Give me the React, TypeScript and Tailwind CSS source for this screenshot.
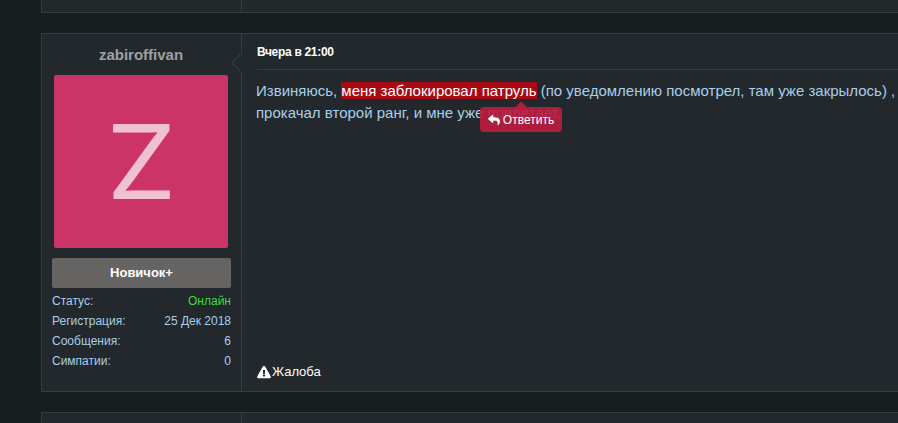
import { FaExclamationTriangle, FaReply } from 'react-icons/fa'

const stats = [
  { label: 'Статус:', value: 'Онлайн', color: 'text-[#3fdc3f]' },
  { label: 'Регистрация:', value: '25 Дек 2018', color: 'text-[#a9cfea]' },
  { label: 'Сообщения:', value: '6', color: 'text-[#a9cfea]' },
  { label: 'Симпатии:', value: '0', color: 'text-[#a9cfea]' },
]

export default function App() {
  return (
    <div className="h-[423px] w-[898px] overflow-hidden bg-[#181d20] pl-[41px] font-['Liberation_Sans',Arial,sans-serif]">
      {/* Previous post */}
      <div className="flex h-[13px] w-[900px] border-b border-l border-[#3a3d40] bg-[#22282c]">
        <div className="w-[200px] border-r border-[#3a3d40]" />
      </div>

      {/* Post */}
      <div className="mt-[20px] flex h-[359px] w-[900px] border border-r-0 border-[#3a3d40] bg-[#22282c]">
        <div className="flex w-[200px] shrink-0 flex-col border-r border-[#3a3d40] pl-[10px] pr-[10px]">
          <div className="mt-[12px] h-[18px] pr-[1px] text-center text-[15px] leading-[18px] font-bold text-[#a0a0a0]">zabiroffivan</div>
          <div className="mt-[11px] ml-[2px] flex h-[173px] w-[174px] items-center justify-center rounded-[2px] bg-[#cc3366] pb-[1px] font-['Inter',sans-serif] text-[103px] leading-none text-[#f0c2d1]">
            <span className="scale-x-[1.08]">Z</span>
          </div>
          <div className="mt-[10px] flex h-[30px] w-[179px] items-center justify-center rounded-[2px] bg-[#666462] text-[13px] font-bold text-white">
            Новичок+
          </div>
          <div className="mt-[3px] w-[179px]">
            {stats.map((row) => (
              <div key={row.label} className="flex h-[20px] items-center justify-between text-[12px] text-[#a9cfea]">
                <span>{row.label}</span>
                <span className={row.color}>{row.value}</span>
              </div>
            ))}
          </div>
        </div>

        <div className="relative flex flex-1 flex-col pl-[15px]">
          {/* Arrow on the column border */}
          <div className="absolute top-[22px] left-[-8px] h-[14px] w-[14px] rotate-45 border-b border-l border-[#3a3d40] bg-[#22282c]" />

          <div className="flex h-[36px] items-center border-b border-[#3a3d40] text-[12px] font-bold tracking-[-0.3px] text-white">
            Вчера в 21:00
          </div>
          <div className="relative mt-[10px] -ml-[1px] whitespace-nowrap text-[15px] leading-[22px] text-[#a9cfea]">
            Извиняюсь, <span className="bg-[#a80a14] text-white">меня заблокировал патруль</span> (по уведомлению посмотрел, там уже закрылось) ,
            <br />
            прокачал второй ранг, и мне уже прилетает.
            {/* Quote tooltip */}
            <div className="absolute top-[27px] left-[224px] flex h-[25px] w-[82px] items-center justify-center gap-[3px] rounded-[4px] bg-[#bb1c40]/90 text-[12px] leading-none text-white">
              <div className="absolute top-[-4px] left-[37px] h-[8px] w-[8px] rotate-45 bg-[#bb1c40]/90" />
              <FaReply className="relative h-[12px] w-[12px]" />
              <span className="relative">Ответить</span>
            </div>
          </div>
          <div className="mt-auto mb-[11px] flex items-center gap-[1px] text-[13px] leading-[16px] text-white">
            <FaExclamationTriangle className="h-[14px] w-[14px]" />
            <span>Жалоба</span>
          </div>
        </div>
      </div>

      {/* Next post */}
      <div className="mt-[20px] flex h-[20px] w-[900px] border-t border-l border-[#3a3d40] bg-[#22282c]">
        <div className="w-[200px] border-r border-[#3a3d40]" />
      </div>
    </div>
  )
}
